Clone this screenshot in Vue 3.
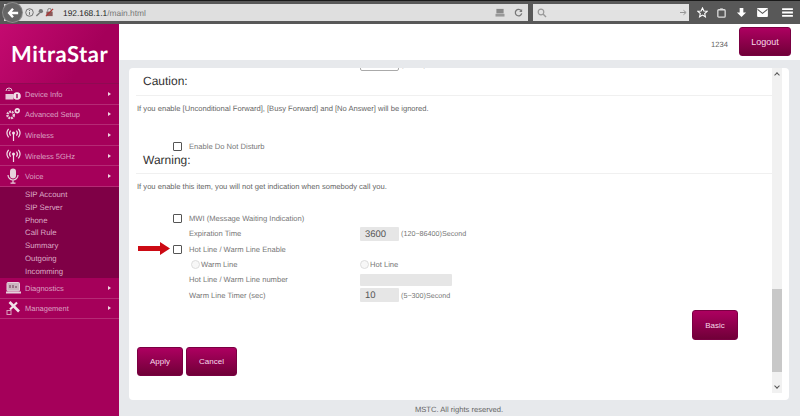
<script setup>
const topMenu = [
  { label: 'Device Info', icon: 'info' },
  { label: 'Advanced Setup', icon: 'gear' },
  { label: 'Wireless', icon: 'wifi' },
  { label: 'Wireless 5GHz', icon: 'wifi' },
  { label: 'Voice', icon: 'mic' }
]
const subMenu = ['SIP Account', 'SIP Server', 'Phone', 'Call Rule', 'Summary', 'Outgoing', 'Incomming']
const bottomMenu = [
  { label: 'Diagnostics', icon: 'diag' },
  { label: 'Management', icon: 'tool' }
]
</script>

<template>
  <div class="page">
    <div class="chrome">
      <div class="urlbar">
        <span class="back">
          <svg width="12" height="12" viewBox="0 0 14 14"><path d="M7 2 2.5 7 7 12M3 7h10" fill="none" stroke="#fff" stroke-width="2.8"/></svg>
        </span>
        <svg class="cicon" width="9" height="9" viewBox="0 0 10 10"><circle cx="5" cy="5" r="4.2" fill="none" stroke="#666"/><path d="M5 4.5v3M5 2.2v1.2" stroke="#666"/></svg>
        <svg class="cicon" width="9" height="9" viewBox="0 0 10 10"><path d="M1.5 9 5 5.5" stroke="#777" stroke-width="1.6"/><circle cx="6.5" cy="3.5" r="2.4" fill="#777"/></svg>
        <svg class="cicon" width="9" height="9" viewBox="0 0 10 10"><rect x="1.5" y="4" width="7" height="5" fill="#8a5a5a"/><path d="M3 4V2.5a2 2 0 0 1 4 0V4" fill="none" stroke="#777"/><path d="M1 9 9 1" stroke="#b03030" stroke-width="1.2"/></svg>
        <span class="addr">192.168.1.1<span class="path">/main.html</span></span>
        <span class="urlright">
          <svg width="12" height="9" viewBox="0 0 12 10"><rect x="2" y="1" width="8" height="5" fill="#8a8a8a"/><rect x="1" y="6.5" width="10" height="3" fill="#999"/></svg>
          <svg width="9" height="9" viewBox="0 0 10 10"><path d="M8 3a3.6 3.6 0 1 0 .6 3" fill="none" stroke="#777" stroke-width="1.4"/><path d="M9 1v3.4H5.8z" fill="#777"/></svg>
        </span>
      </div>
      <div class="search">
        <svg width="10" height="10" viewBox="0 0 10 10"><circle cx="4" cy="4" r="2.8" fill="none" stroke="#999" stroke-width="1.2"/><path d="M6 6l3 3" stroke="#999" stroke-width="1.4"/></svg>
        <svg width="7" height="7" viewBox="0 0 8 8"><path d="M0 4h6M4 1.5 7 4 4 6.5" fill="none" stroke="#888"/></svg>
      </div>
      <div class="tools">
        <svg width="11" height="11" viewBox="0 0 12 12"><path d="M6 1l1.5 3.3 3.6.4-2.7 2.4.8 3.6L6 8.8l-3.2 1.9.8-3.6L.9 4.7l3.6-.4z" fill="none" stroke="#fff" stroke-width="1.2"/></svg>
        <svg class="t2" width="11" height="11" viewBox="0 0 12 12"><rect x="2" y="3" width="8" height="8" rx="1" fill="none" stroke="#ddd" stroke-width="1.4"/><path d="M4.5 1.5h3V3h-3z" fill="#ddd"/></svg>
        <svg width="11" height="11" viewBox="0 0 12 12"><path d="M4 1h4v5h3L6 11 1 6h3z" fill="#fff"/></svg>
        <svg class="t4" width="11" height="9" viewBox="0 0 12 10"><rect width="12" height="10" rx="1" fill="#fff"/><path d="M0.5 1.5 6 6l5.5-4.5" fill="none" stroke="#555" stroke-width="1.2"/></svg>
        <svg class="burger" width="11" height="9" viewBox="0 0 12 10"><path d="M0 1.2h12M0 5h12M0 8.8h12" stroke="#fff" stroke-width="2"/></svg>
      </div>
    </div>

    <div class="body">
      <aside class="side">
        <div class="logo">MitraStar</div>
        <nav class="menu">
          <div v-for="m in topMenu" :key="m.label" class="item">
            <span class="micon">
              <svg v-if="m.icon === 'info'" width="16" height="14" viewBox="0 0 16 14"><path d="M1 4a3 3 0 0 1 6 0M3 4a1 1 0 0 1 2 0" fill="none" stroke="#e6c8d8"/><rect x="0.5" y="7" width="8" height="5.5" fill="#e6c8d8"/><circle cx="12" cy="9" r="3.8" fill="#f2e2ea"/><rect x="11.3" y="7" width="1.4" height="4.2" fill="#a0005a"/></svg>
              <svg v-else-if="m.icon === 'gear'" width="17" height="14" viewBox="0 0 17 14"><circle cx="6" cy="8" r="3.4" fill="none" stroke="#e6c8d8" stroke-width="2.6" stroke-dasharray="2 .8"/><circle cx="13" cy="3.5" r="2" fill="none" stroke="#f2e2ea" stroke-width="1.8"/></svg>
              <svg v-else-if="m.icon === 'wifi'" width="15" height="14" viewBox="0 0 15 14"><circle cx="7.5" cy="5" r="1.5" fill="#f2e2ea"/><path d="M7.5 6v7M4.6 2.6a4 4 0 0 0 0 5M10.4 2.6a4 4 0 0 1 0 5M2.6 .8a7 7 0 0 0 0 8.6M12.4 .8a7 7 0 0 1 0 8.6" fill="none" stroke="#f2e2ea" stroke-width="1.2"/></svg>
              <svg v-else width="12" height="16" viewBox="0 0 12 16"><rect x="3" y="0.5" width="6" height="10" rx="3" fill="#e6d2dc"/><path d="M1 7a5 5 0 0 0 10 0M6 12v3M3.5 15.2h5" fill="none" stroke="#e6d2dc" stroke-width="1.2"/></svg>
            </span>
            <span class="mlabel">{{ m.label }}</span>
            <span class="caret"></span>
          </div>
          <div class="sub">
            <div v-for="s in subMenu" :key="s" class="subitem">{{ s }}</div>
          </div>
          <div v-for="m in bottomMenu" :key="m.label" class="item">
            <span class="micon">
              <svg v-if="m.icon === 'diag'" width="15" height="12" viewBox="0 0 15 12"><rect x="1" y="0.5" width="12.5" height="8.5" rx="1" fill="#cbb6c0" stroke="#e6d2dc"/><path d="M4 6V3M7 6V3M10 6V4" stroke="#6a3550"/><rect y="9.5" width="15" height="2" fill="#e6d2dc"/></svg>
              <svg v-else width="15" height="15" viewBox="0 0 15 15"><path d="M3.5 1.5 13 11" stroke="#f2e2ea" stroke-width="2.6"/><path d="M11 2 4 9" stroke="#f2e2ea" stroke-width="2.2"/><rect x="1" y="10" width="4" height="4" fill="none" stroke="#d8a0bc"/></svg>
            </span>
            <span class="mlabel">{{ m.label }}</span>
            <span class="caret"></span>
          </div>
        </nav>
      </aside>

      <main class="main">
        <header class="head">
          <span class="user">1234</span>
          <button class="btn logout">Logout</button>
        </header>
        <div class="graybar">
          <section class="panel">
            <div class="scroll">
              <div class="clipped">
                <span class="clip-label">No Answer Time</span>
                <span class="clip-input">10</span>
                <span class="clip-hint">(5~300)Second</span>
              </div>
              <h3 class="title">Caution:</h3>
              <p class="note">If you enable [Unconditional Forward], [Busy Forward] and [No Answer] will be ignored.</p>
              <div class="row dnd">
                <span class="check"></span><span class="lbl">Enable Do Not Disturb</span>
              </div>
              <h3 class="title warn">Warning:</h3>
              <p class="note">If you enable this item, you will not get indication when somebody call you.</p>

              <div class="form">
                <div class="row mwi">
                  <span class="check"></span><span class="lbl">MWI (Message Waiting Indication)</span>
                </div>
                <div class="row tall">
                  <span class="lbl col">Expiration Time</span>
                  <span class="field">3600</span><span class="hint">(120~86400)Second</span>
                </div>
                <div class="row tall hot">
                  <svg class="arrow" width="32" height="13" viewBox="0 0 32 13"><path d="M0 4h22V0l10 6.5L22 13V9H0z" fill="#cc0a14"/></svg>
                  <span class="check"></span><span class="lbl">Hot Line / Warm Line Enable</span>
                </div>
                <div class="row tall">
                  <span class="radiocell"><span class="radio"></span><span class="lbl">Warm Line</span></span>
                  <span class="radio r2"></span><span class="lbl">Hot Line</span>
                </div>
                <div class="row tall">
                  <span class="lbl col">Hot Line / Warm Line number</span>
                  <span class="field wide"></span>
                </div>
                <div class="row tall">
                  <span class="lbl col">Warm Line Timer (sec)</span>
                  <span class="field">10</span><span class="hint">(5~300)Second</span>
                </div>
              </div>

              <div class="basicrow"><button class="btn basic">Basic</button></div>
              <div class="actions">
                <button class="btn apply">Apply</button>
                <button class="btn cancel">Cancel</button>
              </div>
            </div>
            <div class="sbar">
              <span class="sarrow up"></span>
              <span class="thumb"></span>
              <span class="sarrow down"></span>
            </div>
          </section>
          <footer class="foot">MSTC. All rights reserved.</footer>
        </div>
      </main>
    </div>
  </div>
</template>

<style>
html, body { margin: 0; padding: 0; background: #fff; }
</style>

<style scoped>
.page {
  width: 800px; height: 416px; overflow: hidden;
  display: flex; flex-direction: column;
  font-family: "Liberation Sans", Arial, sans-serif;
  text-rendering: geometricPrecision;
}
.chrome {
  height: 24px; box-sizing: border-box; flex: none;
  background: #585858; border-top: 1px solid #1a1a1a;
  padding: 3px 0 3px 4px;
  display: flex; gap: 5px; align-items: stretch;
}
.urlbar {
  width: 524px; flex: none; background: #dfdfdf; display: flex; align-items: center;
  gap: 1px; position: relative; padding-left: 21px; box-sizing: border-box;
}
.back {
  position: absolute; left: -1px; top: -1px; width: 19px; height: 19px; border-radius: 50%;
  background: #666; box-shadow: 0 0 0 1px #8c8c8c; display: flex; align-items: center; justify-content: center;
}
.cicon { flex: none; }
.addr { font-size: 8.4px; color: #222; margin-left: 8px; }
.path { color: #777; }
.urlright { margin-left: auto; display: flex; align-items: center; gap: 8px; padding-right: 5px; }
.search {
  width: 156px; flex: none; background: #e2e2e2; display: flex; align-items: center;
  justify-content: space-between; padding: 0 2px 0 4px; box-sizing: border-box;
}
.tools { display: flex; align-items: center; gap: 8px; padding-left: 3px; flex: none; }
.t2 { margin-right: 1px; }
.t4 { margin-left: 2px; }
.burger { margin-left: 6px; }

.body { flex: 1; display: flex; min-height: 0; }
.side {
  width: 119px; flex: none; background: #a5005a;
  display: flex; flex-direction: column;
}
.logo {
  height: 60px; box-sizing: border-box; flex: none;
  background: linear-gradient(125deg, #c40a70 0%, #a5005a 70%);
  color: #fff; font: 700 22px "Lato", sans-serif; letter-spacing: .5px;
  padding: 16px 0 0 11px; border-bottom: 1px solid #8f0a52;
}
.menu { display: flex; flex-direction: column; }
.item {
  height: 20.6px; box-sizing: border-box; display: flex; align-items: center;
  border-bottom: 1px solid #b52a75; position: relative; padding: 1px 0 0 25px;
}
.micon { position: absolute; left: 5px; top: 50%; transform: translateY(-50%); width: 16px; display: flex; justify-content: center; }
.mlabel { font-size: 7.5px; color: #dba0c2; }
.caret {
  position: absolute; right: 8px; top: 50%; margin-top: -2px;
  border-left: 3px solid #eed6e2; border-top: 2px solid transparent; border-bottom: 2px solid transparent;
}
.sub {
  height: 91px; box-sizing: border-box; background: #7f0046; padding-top: 2px;
  display: flex; flex-direction: column;
}
.subitem { height: 12.8px; line-height: 12.8px; font-size: 7.8px; color: #dba8c4; padding-left: 25px; }

.main { flex: 1; display: flex; flex-direction: column; min-width: 0; }
.head {
  height: 36px; flex: none; box-sizing: border-box; background: #fff;
  display: flex; align-items: flex-start; justify-content: flex-end; padding: 3px 9px 0 0;
}
.user { font-size: 7.6px; color: #666; margin: 13px 11px 0 0; }
.btn {
  border: 1px solid #7a0042; border-radius: 3px; color: #f6dbe9; padding: 0;
  font: 8px "Liberation Sans", Arial, sans-serif;
  background: linear-gradient(180deg, #ad0060 0%, #700038 100%);
}
.logout { width: 52px; height: 29px; font-size: 9px; }
.graybar {
  flex: 1; min-height: 0; background: #e7e9ec; padding: 8px 11px 0 10px;
  display: flex; flex-direction: column;
}
.panel {
  height: 332px; flex: none; background: #fff; border-radius: 4px; display: flex;
  box-sizing: border-box; padding-right: 7px; overflow: hidden;
}
.scroll { flex: 1; min-width: 0; overflow: hidden; display: flex; flex-direction: column; position: relative; }
.sbar { width: 10px; flex: none; background: #f1f1f1; display: flex; flex-direction: column; align-items: center; position: relative; margin-bottom: 7px; }
.sarrow { position: absolute; width: 3px; height: 3px; border-left: 1px solid #555; border-top: 1px solid #555; }
.up { top: 5px; transform: rotate(45deg); }
.down { bottom: 5px; transform: rotate(225deg); }
.thumb { position: absolute; top: 221px; left: 0; width: 10px; height: 83px; background: #c8c8c8; }

.clipped { height: 0; position: relative; }
.clip-label { position: absolute; left: 59px; top: -7px; font-size: 7.6px; color: #888; }
.clip-input {
  position: absolute; left: 231px; top: -9px; width: 39px; height: 12px; box-sizing: border-box;
  border: 1px solid #aaa; border-radius: 2px; font-size: 8px; color: #777; padding-left: 8px;
}
.clip-hint { position: absolute; left: 272px; top: -8px; font-size: 7.2px; color: #888; }
.title {
  margin: 0 0 0 7px; font-weight: 400; font-size: 12px; line-height: 18px; color: #333;
  padding: 4px 0 5px 7px; height: 28px; box-sizing: border-box;
  border-bottom: 1px solid #f0f0f0;
}
.title.warn { padding-top: 0; height: 22px; line-height: 17px; }
.note { margin: 0; font-size: 7.6px; line-height: 11px; color: #666; padding: 7px 0 0 8px; height: 18px; box-sizing: content-box; }
.row { display: flex; align-items: center; position: relative; padding-left: 44px; }
.dnd { height: 13px; margin-top: 19px; margin-bottom: -1px; }
.check { width: 7px; height: 7px; border: 1px solid #555; border-radius: 1px; background: #fff; margin-right: 7px; flex: none; }
.lbl { font-size: 7.6px; color: #777; }
.form { margin-top: 12px; display: flex; flex-direction: column; }
.mwi { height: 15px; }
.tall { height: 15.4px; }
.form .row .col { padding-left: 16px; width: 171px; flex: none; }
.field {
  width: 39px; height: 14px; background: #e6e6e6; border-radius: 1px; font-size: 9.5px; color: #555;
  line-height: 15px; padding-left: 5px; box-sizing: border-box; flex: none;
}
.wide { width: 92px; height: 12px; }
.hint { font-size: 7.2px; color: #777; margin-left: 2px; }
.arrow { position: absolute; left: 9px; top: 1px; }
.radiocell { display: flex; align-items: center; width: 169px; padding-left: 18px; flex: none; }
.radio { width: 7px; height: 7px; border-radius: 50%; border: 1px solid #ddd; background: #f7f7f7; margin-right: 1px; flex: none; }
.basicrow { display: flex; justify-content: flex-end; padding-right: 34px; margin-top: 7.5px; }
.basic { width: 46px; height: 30px; font-size: 8px; }
.actions { display: flex; gap: 3px; padding-left: 8px; margin-top: 7px; }
.apply { width: 46px; height: 29px; }
.cancel { width: 51px; height: 29px; }
.foot { text-align: center; font-size: 7.6px; color: #666; padding-top: 5px; }
</style>
